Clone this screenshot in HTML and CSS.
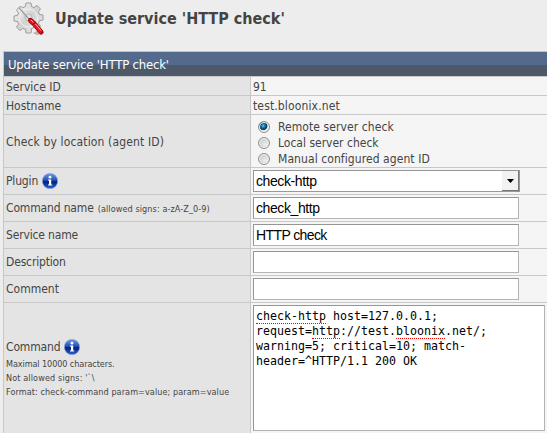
FILE: index.html
```
<!DOCTYPE html>
<html lang="en">
<head>
<meta charset="utf-8">
<title>Update service</title>
<link rel="stylesheet" href="styles.css">
</head>
<body>
<svg width="0" height="0" class="defs">
  <defs>
    <linearGradient id="ball" x1="0" y1="0" x2="0" y2="1"><stop offset="0" stop-color="#6d9be6"/><stop offset=".45" stop-color="#2450b4"/><stop offset=".55" stop-color="#001f80"/><stop offset="1" stop-color="#2b62cc"/></linearGradient>
    <symbol id="info" viewBox="0 0 16 16"><circle cx="8" cy="8" r="7.7" fill="url(#ball)" stroke="#8eaadd" stroke-width=".5"/><path d="M6 6.400H9.200v5h1v1.200H6v-1.200h1V7.600H6z" fill="#fff"/><circle cx="8" cy="4.200" r="1.400" fill="#fff"/></symbol>
  </defs>
</svg>
<header class="title">
  <svg class="gear" width="32" height="34" viewBox="0 0 32 34">
    <defs>
      <linearGradient id="metal" x1="0" y1="0" x2="1" y2="1"><stop offset="0" stop-color="#fafafa"/><stop offset=".5" stop-color="#d2d2d2"/><stop offset="1" stop-color="#ececec"/></linearGradient>
    </defs>
    <path d="M12.500 4.500 13 1h5l.6 3.500 2.600 1.100L24 3.400 27.500 7l-2.100 2.800 1.100 2.700 3.500.5v5l-3.500.6-1.100 2.600 2.100 2.800-3.500 3.500-2.800-2.100-2.600 1.100L18 31h-5l-.5-3.500-2.700-1.100L7 28.500 3.400 25l2.200-2.800-1.100-2.600L1 19v-5l3.500-.6 1.100-2.600L3.400 8 7 4.500l2.800 1.100z" fill="url(#metal)" stroke="#9c9c9c" stroke-width="1"/>
    <circle cx="15.500" cy="16" r="9" fill="none" stroke="#f2f2f2" stroke-width="1"/>
    <circle cx="15.500" cy="15.500" r="3.500" fill="#e4e4e4" stroke="#aaa" stroke-width=".8"/>
    <path d="M20 31l4 2 7-2-3-4z" fill="#777" opacity=".5"/>
    <path d="M6 5.500 17 18" stroke="#888" stroke-width="1.400"/>
    <path d="M6.500 5.500 17.500 17.500" stroke="#fff" stroke-width=".6"/>
    <path d="M17.500 18.500 21 21.500 28 30" fill="none" stroke="#a90000" stroke-width="5" stroke-linecap="round"/>
    <path d="M17.500 18.500 21 21.500 27.500 29.500" fill="none" stroke="#e01820" stroke-width="3.400" stroke-linecap="round"/>
    <path d="M18 18 20.500 20.500M22.500 22 28 28.500" stroke="#ffb5b5" stroke-width="1"/>
    <path d="M19 23 22.500 20" stroke="#900" stroke-width="1"/>
  </svg>
  <h1>Update service 'HTTP check'</h1>
</header>
<main class="panel">
  <h2>Update service 'HTTP check'</h2>
  <div class="row short"><div class="label"><span>Service ID</span></div><div class="value">91</div></div>
  <div class="row short"><div class="label"><span>Hostname</span></div><div class="value"><span class="loose">test.bloonix.net</span></div></div>
  <div class="row location"><div class="label"><span class="loose">Check by location (agent ID)</span></div>
    <div class="value radios">
      <label><i class="radio on"></i><span class="wide">Remote server check</span></label>
      <label><i class="radio"></i><span>Local server check</span></label>
      <label><i class="radio"></i><span class="wide">Manual configured agent ID</span></label>
    </div>
  </div>
  <div class="row"><div class="label"><span class="tight">Plugin</span><svg class="info"><use href="#info"/></svg></div>
    <div class="value"><div class="field select"><span>check-http</span><b class="drop"><svg width="7" height="4" viewBox="0 0 7 4"><path d="M0 0h7L3.500 4z"/></svg></b></div></div></div>
  <div class="row"><div class="label"><span class="tight">Command name</span><small class="allowed">(allowed signs: a-zA-Z_0-9)</small></div><div class="value"><div class="field"><span>check_http</span></div></div></div>
  <div class="row"><div class="label"><span class="tight">Service name</span></div><div class="value"><div class="field"><span class="caps">HTTP check</span></div></div></div>
  <div class="row"><div class="label"><span class="tight">Description</span></div><div class="value"><div class="field"></div></div></div>
  <div class="row"><div class="label"><span>Comment</span></div><div class="value"><div class="field"></div></div></div>
  <div class="row command"><div class="label">
      <div class="cmd"><span class="tight">Command</span><svg class="info"><use href="#info"/></svg></div>
      <small class="limit">Maximal 10000 characters.</small>
      <small class="signs">Not allowed signs: '`\</small>
      <small class="format">Format: check-command param=value; param=value</small>
    </div>
    <div class="value"><div class="area">
      <div class="line"><u>check-http</u><span> host=127.0.0.1;</span></div>
      <div class="line"><span>request=</span><u>http</u><span>://test.</span><u>bloonix</u><span>.net/;</span></div>
      <div class="line"><span>warning=5; critical=10; match-</span></div>
      <div class="line"><span>header=^HTTP/1.1 200 OK</span></div>
    </div></div></div>
</main>
</body>
</html>
```
FILE: styles.css
```
* { box-sizing: border-box; }
body { margin: 0; width: 547px; height: 433px; overflow: hidden; background: #ededed; color: #444; font: 12px/16px "DejaVu Sans Condensed", "DejaVu Sans", sans-serif; font-stretch: condensed; }
.defs { position: absolute; }
.title { display: flex; height: 51px; padding: 2px 0 0 13px; }
.gear { flex: none; }
h1 { margin: 6px 0 0 10px; font-size: 16px; line-height: 22px; font-weight: bold; white-space: nowrap; }
span, small { white-space: nowrap; }
.panel { margin-left: 3px; border-left: 1px solid #c8c8c8; }
h2 { margin: 0; height: 26px; padding: 1px 0 0 4px; border-top: 1px solid #c4c4c4; border-bottom: 1px solid #c8c8c8; background: linear-gradient(#536a8c 13px, #4d5969 13px); color: #fff; font-size: 13px; line-height: 23px; font-weight: normal; letter-spacing: -0.19px; }
.row { display: grid; grid-template-columns: 247px 1fr; height: 27px; border-bottom: 1px solid #c8c8c8; }
.row.short { height: 19px; }
.row.location { height: 53px; }
.row.command { height: 134px; }
.label { display: flex; align-items: center; padding-left: 2px; background: #e4e4e4; border-right: 1px solid #c8c8c8; }
.value { display: flex; align-items: center; padding-left: 2px; background: #f5f5f5; }
.short .label, .short .value, .location .label { padding-top: 2px; }
.loose { letter-spacing: 0.14px; }
.wide { letter-spacing: 0.08px; }
.tight { letter-spacing: -0.16px; }
.info { width: 16px; height: 16px; margin-left: 4px; }
.radios { flex-direction: column; align-items: flex-start; justify-content: center; padding: 3px 0 0 7px; }
.radios label { display: flex; align-items: center; height: 16px; }
.radio { width: 12px; height: 12px; margin-right: 8px; border: 1px solid #8e8f8f; border-radius: 50%; background: radial-gradient(circle at 65% 65%, #eee, #cfd1d5 60%); box-shadow: inset 0 0 0 1px #f5f5f5; }
.radio.on { background: radial-gradient(circle at 42% 38%, #79d4f5 0, #1580b6 18%, #0c3454 46%, #e5e5e5 54%); }
.field { display: flex; align-items: center; width: 266px; height: 22px; padding-left: 2px; border: 1px solid #969696; border-right-color: #b4b4b4; border-bottom-color: #b4b4b4; background: #fff; color: #000; font: 14px/18px "Liberation Sans", Arial, sans-serif; letter-spacing: -0.4px; }
.field .caps { letter-spacing: -0.6px; }
.select { width: 267px; border-bottom-color: #999; border-right-color: #999; }
.drop { display: flex; align-items: center; justify-content: center; width: 17px; height: 20px; margin-left: auto; background: #f2f2f2; border-right: 1px solid #777; border-bottom: 1px solid #777; }
small { font-size: 9px; line-height: 14px; }
.allowed { margin: 2px 0 0 4px; letter-spacing: 0.1px; }
.command .label { flex-direction: column; align-items: flex-start; padding-top: 34px; }
.cmd { display: flex; align-items: center; height: 19px; margin-bottom: 1px; }
.limit { letter-spacing: -0.08px; }
.signs { letter-spacing: 0.13px; }
.format { letter-spacing: 0.09px; }
.command .value { align-items: flex-start; padding-top: 2px; }
.area { width: 292px; height: 126px; padding: 3px 2px; border: 1px solid #969696; border-right-color: #b4b4b4; border-bottom-color: #b4b4b4; background: #fff; color: #000; font: 11.63px/15px "DejaVu Sans Mono", monospace; }
.line { display: flex; height: 15px; }
.line span, .line u { white-space: pre; line-height: 15px; }
.line u { height: 15px; text-decoration: none; border-bottom: 1px dotted #f00; }
```
